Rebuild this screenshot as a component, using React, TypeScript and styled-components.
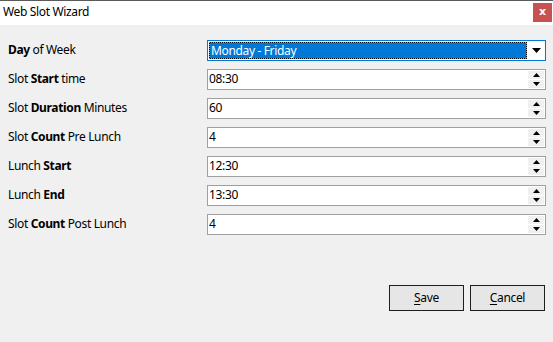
import styled, { createGlobalStyle } from 'styled-components';

const GlobalStyle = createGlobalStyle`
  html, body {
    margin: 0;
    padding: 0;
    background: #f0f0f0;
  }
  body {
    font-family: "Noto Sans", "Open Sans", sans-serif;
    font-size: 12px;
    letter-spacing: -0.35px;
    color: #000;
  }
`;

const fields = [
  { label: <><b>Day</b> of Week</>, value: 'Monday - Friday', combo: true },
  { label: <>Slot <b>Start</b> time</>, value: '08:30' },
  { label: <>Slot <b>Duration</b> Minutes</>, value: '60' },
  { label: <>Slot <b>Count</b> Pre Lunch</>, value: '4' },
  { label: <>Lunch <b>Start</b></>, value: '12:30' },
  { label: <>Lunch <b>End</b></>, value: '13:30' },
  { label: <>Slot <b>Count</b> Post Lunch</>, value: '4' },
];

function App() {
  return (
    <Window>
      <GlobalStyle />
      <TitleBar>
        <Title>Web Slot Wizard</Title>
        <CloseButton>x</CloseButton>
      </TitleBar>
      <Body>
        <Form>
          {fields.map((f, i) => (
            <Row key={i}>
              <Label>{f.label}</Label>
              {f.combo ? (
                <Combo>
                  <FocusRect>
                    <Selected>{f.value}</Selected>
                  </FocusRect>
                  <DropArrow>
                    <svg width="9" height="5" viewBox="0 0 9 5">
                      <path d="M0 0h9L4.5 5z" fill="#000" />
                    </svg>
                  </DropArrow>
                </Combo>
              ) : (
                <SpinBox>
                  <SpinText>{f.value}</SpinText>
                  <Spinner>
                    <SpinButton>
                      <svg width="7" height="4" viewBox="0 0 7 4">
                        <path d="M3.5 0L7 4H0z" fill="#000" />
                      </svg>
                    </SpinButton>
                    <SpinButton>
                      <svg width="7" height="4" viewBox="0 0 7 4">
                        <path d="M0 0h7L3.5 4z" fill="#000" />
                      </svg>
                    </SpinButton>
                  </Spinner>
                </SpinBox>
              )}
            </Row>
          ))}
        </Form>
        <Footer>
          <Button><u>S</u>ave</Button>
          <Button><u>C</u>ancel</Button>
        </Footer>
      </Body>
    </Window>
  );
}

const Window = styled.div`
  display: flex;
  flex-direction: column;
  height: 342px;
  background: #f0f0f0;
`;

const TitleBar = styled.div`
  display: flex;
  align-items: center;
  justify-content: space-between;
  height: 24px;
  border-top: 1px solid #5a5a5a;
  background: #fff;
  padding: 0 1px 0 3px;
`;

const Title = styled.span`
  font-size: 12px;
  line-height: 16px;
  margin-top: -2px;
`;

const CloseButton = styled.div`
  width: 19px;
  height: 19px;
  margin-top: -2px;
  background: #c75050;
  color: #fff;
  font-weight: bold;
  font-size: 11px;
  line-height: 17px;
  text-align: center;
  letter-spacing: 0;
  font-family: "DejaVu Sans", sans-serif;
`;

const Body = styled.div`
  flex: 1;
  display: flex;
  flex-direction: column;
  padding: 15px 7px 0 8px;
`;

const Form = styled.div`
  display: flex;
  flex-direction: column;
  gap: 8px;
`;

const Row = styled.div`
  display: grid;
  grid-template-columns: 199px 339px;
  align-items: center;
  height: 21px;
`;

const Label = styled.div`
  line-height: 16px;
  margin-top: -2px;
  white-space: nowrap;
`;

const Combo = styled.div`
  display: flex;
  height: 21px;
  box-sizing: border-box;
  border: 1px solid #0078d7;
  background: #fff;
  padding: 1px 0 1px 1px;
`;

const FocusRect = styled.div`
  flex: 1;
  padding: 1px;
  background: repeating-conic-gradient(#000 0 25%, #f08a1e 0 50%) 0 0 / 2px 2px;
`;

const Selected = styled.div`
  height: 100%;
  background: #0078d7;
  color: #fff;
  line-height: 15px;
  padding-left: 1px;
  white-space: nowrap;
`;

const DropArrow = styled.div`
  width: 18px;
  display: flex;
  align-items: center;
  justify-content: center;
  background: #fff;
`;

const SpinBox = styled.div`
  display: flex;
  height: 21px;
  box-sizing: border-box;
  border: 1px solid #a0a0a0;
  background: #fff;
`;

const SpinText = styled.div`
  flex: 1;
  padding-left: 1px;
  line-height: 17px;
`;

const Spinner = styled.div`
  display: flex;
  flex-direction: column;
  justify-content: space-between;
  width: 16px;
  padding: 1px 1px 1px 0;
`;

const SpinButton = styled.div`
  height: 8px;
  display: flex;
  align-items: center;
  justify-content: center;
  background: #f0f0f0;
`;

const Footer = styled.div`
  display: flex;
  justify-content: flex-end;
  gap: 6px;
  margin-top: 50px;
  padding-right: 1px;
`;

const Button = styled.button`
  width: 75px;
  height: 26px;
  box-sizing: border-box;
  border: 1px solid #1e1e1e;
  background: #e6e6e6;
  font-family: "Noto Sans", "Open Sans", sans-serif;
  font-size: 12px;
  letter-spacing: -0.35px;
  color: #000;
  padding: 0;
  line-height: 16px;

  u {
    text-decoration-thickness: 1px;
    text-underline-offset: 2px;
  }
`;

export default App;
